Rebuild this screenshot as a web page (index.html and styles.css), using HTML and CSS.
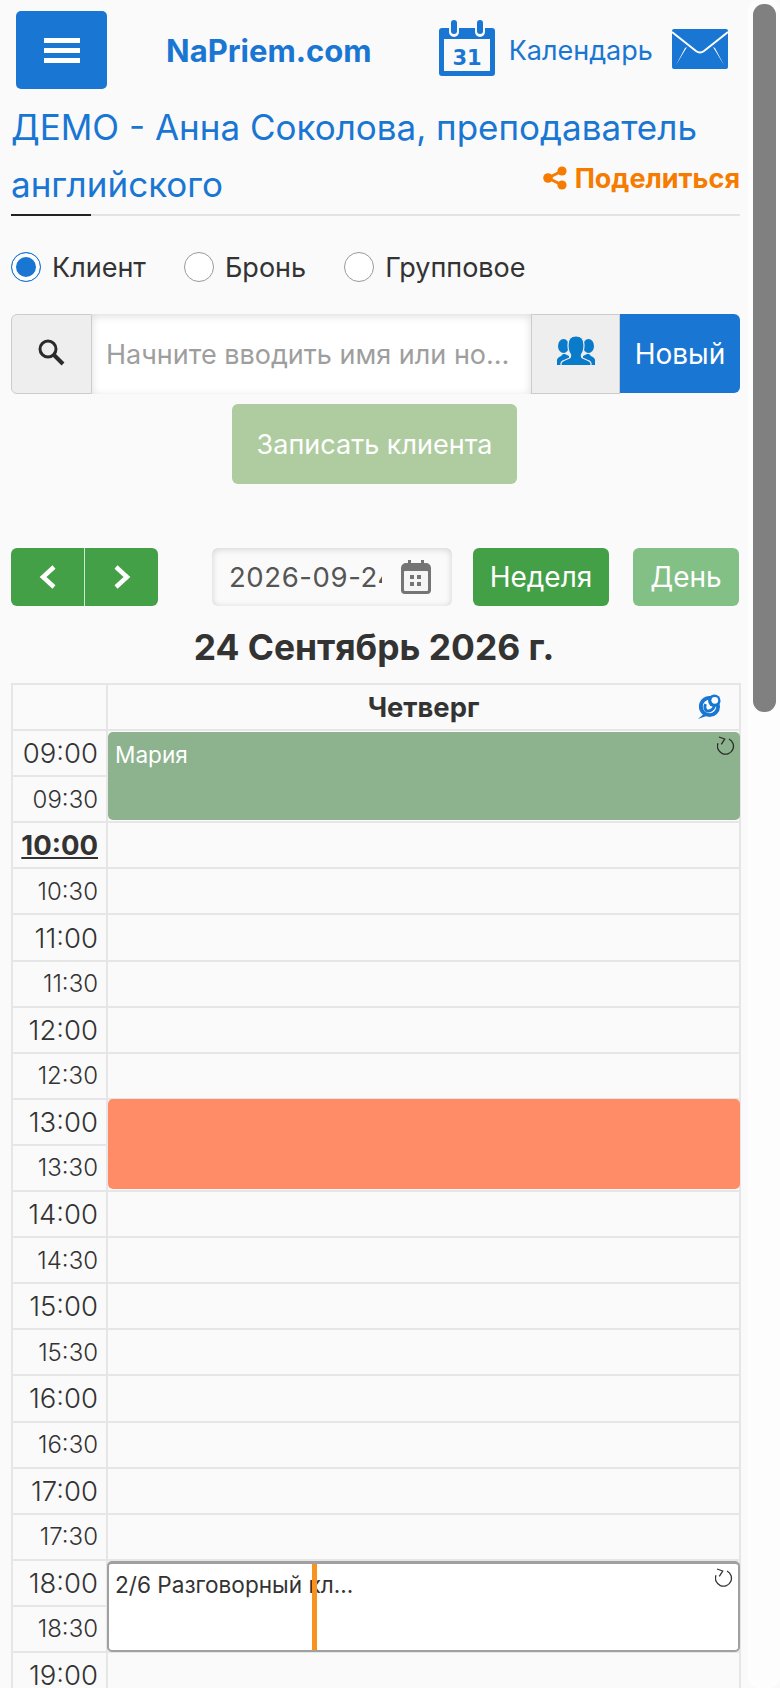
FILE: index.html
```html
<!DOCTYPE html>
<html lang="ru">
<head>
<meta charset="utf-8">
<title>NaPriem.com</title>
<link rel="stylesheet" href="styles.css">
</head>
<body>
<div class="scrolltrack"><div class="scrollthumb"></div></div>
<main class="page">
  <header class="topbar">
    <button class="burger" aria-label="Меню"><span></span><span></span><span></span></button>
    <a class="brand">NaPriem.com</a>
    <a class="callink">
      <svg class="calicon" viewBox="0 0 56 56"><path fill="#1976d2" d="M3 8h7v4a5 5 0 0 0 10 0V8h16v4a5 5 0 0 0 10 0V8h7a3 3 0 0 1 3 3v42a3 3 0 0 1-3 3H3a3 3 0 0 1-3-3V11a3 3 0 0 1 3-3z"/><rect x="12" y="0" width="6" height="14" rx="3" fill="#1976d2"/><rect x="38" y="0" width="6" height="14" rx="3" fill="#1976d2"/><rect x="5" y="19" width="46" height="32" fill="#fafafa"/><text x="28" y="45" text-anchor="middle" class="caltext">31</text></svg>
      <span>Календарь</span>
    </a>
    <svg class="mailicon" viewBox="0 0 56 40"><rect width="56" height="40" rx="2" fill="#1976d2"/><path d="M0 3l24 19q4 3 8 0L56 3" fill="none" stroke="#fff" stroke-width="2"/><path d="M13 19L4 36l11-18zM43 19l9 17-11-18z" fill="#fff"/></svg>
  </header>

  <div class="heading">
    <h1 class="title">ДЕМО - Анна Соколова, преподаватель</h1>
    <div class="headrow">
      <span class="title">английского</span>
      <a class="share"><svg class="shareicon" viewBox="0 0 24 24"><circle cx="19" cy="5" r="4.600"/><circle cx="19" cy="19" r="4.600"/><circle cx="5" cy="12" r="4.800"/><path d="M5 12L19 5M5 12l14 7" stroke="#f57c00" stroke-width="3"/></svg>Поделиться</a>
    </div>
  </div>

  <div class="radios">
    <label class="radio"><span class="dot on"></span>Клиент</label>
    <label class="radio"><span class="dot"></span>Бронь</label>
    <label class="radio"><span class="dot"></span>Групповое</label>
  </div>

  <div class="search">
    <span class="addon first"><svg class="searchicon" viewBox="0 0 28 28"><circle cx="11" cy="11" r="8" fill="none" stroke="#2b2b2b" stroke-width="3"/><path d="M17 17l9 9" stroke="#2b2b2b" stroke-width="4"/></svg></span>
    <input class="searchinput" type="text" placeholder="Начните вводить имя или номер телефона">
    <span class="addon"><svg class="usersicon" viewBox="0 0 38 30"><g fill="#0a7acb"><ellipse cx="6.500" cy="11" rx="5.500" ry="7"/><ellipse cx="31.500" cy="11" rx="5.500" ry="7"/><path d="M0 30v-5q0-2 4-4l2-2h2l4 2v9zM38 30v-5q0-2-4-4l-2-2h-2l-4 2v9z"/></g><path fill="#0a7acb" stroke="#eee" stroke-width="1.200" d="M4 30.500v-2q0-2 4-3.500l4.500-2q1.500-1 1-3.500-2.500-3-2.500-9.500Q11 1 19 1t8 9q0 6.500-2.500 9.500-.5 2.500 1 3.500l4.500 2q4 1.500 4 3.500v2z"/></svg></span>
    <button class="btn-new">Новый</button>
  </div>

  <div class="submitrow"><button class="btn-submit">Записать клиента</button></div>

  <div class="nav">
    <div class="pager">
      <button class="pagebtn"><svg viewBox="0 0 18 24"><path d="M15 2L4 12l11 10" fill="none" stroke="#fff" stroke-width="4.500"/></svg></button>
      <button class="pagebtn divided"><svg viewBox="0 0 18 24"><path d="M3 2l11 10L3 22" fill="none" stroke="#fff" stroke-width="4.500"/></svg></button>
    </div>
    <div class="date">
      <span class="datetext">2026-09-24</span>
      <svg class="dateicon" viewBox="0 0 30 34"><path fill="#757575" d="M5 3h2V0h3v3h10V0h3v3h2a5 5 0 0 1 5 5v22a4 4 0 0 1-4 4H4a4 4 0 0 1-4-4V8a5 5 0 0 1 5-5z"/><rect x="3" y="11" width="24" height="20" rx="1" fill="#f5f5f5"/><path fill="#757575" d="M9 15h4v4H9zM16 15h4v4h-4zM9 22h4v4H9zM16 22h4v4h-4z"/></svg>
    </div>
    <button class="btn-week">Неделя</button>
    <button class="btn-day">День</button>
  </div>

  <h2 class="dayhead">24 Сентябрь 2026 г.</h2>

  <div class="sched">
    <table class="grid">
      <thead>
        <tr><th class="timecol"></th><th class="daycol">Четверг<svg class="linkicon" viewBox="0 0 26 27"><path d="M9 19l-8 7 11-4z" fill="#1976d2"/><circle cx="13" cy="13" r="9" fill="#fff" stroke="#1976d2" stroke-width="4"/><circle cx="18" cy="7" r="6.500" fill="#1976d2"/><circle cx="18.500" cy="6.500" r="3.500" fill="#fff"/><path d="M18 12.500a6.500 6.500 0 0 1-8 5 6 6 0 0 1-1-7" fill="none" stroke="#1976d2" stroke-width="3"/></svg></th></tr>
      </thead>
      <tbody>
        <tr><td class="hour">09:00</td><td></td></tr>
        <tr><td class="half">09:30</td><td></td></tr>
        <tr><td class="hour now">10:00</td><td></td></tr>
        <tr><td class="half">10:30</td><td></td></tr>
        <tr><td class="hour">11:00</td><td></td></tr>
        <tr><td class="half">11:30</td><td></td></tr>
        <tr><td class="hour">12:00</td><td></td></tr>
        <tr><td class="half">12:30</td><td></td></tr>
        <tr><td class="hour">13:00</td><td></td></tr>
        <tr><td class="half">13:30</td><td></td></tr>
        <tr><td class="hour">14:00</td><td></td></tr>
        <tr><td class="half">14:30</td><td></td></tr>
        <tr><td class="hour">15:00</td><td></td></tr>
        <tr><td class="half">15:30</td><td></td></tr>
        <tr><td class="hour">16:00</td><td></td></tr>
        <tr><td class="half">16:30</td><td></td></tr>
        <tr><td class="hour">17:00</td><td></td></tr>
        <tr><td class="half">17:30</td><td></td></tr>
        <tr><td class="hour">18:00</td><td></td></tr>
        <tr><td class="half">18:30</td><td></td></tr>
        <tr><td class="hour last">19:00</td><td></td></tr>
      </tbody>
    </table>
    <div class="event ev-maria">Мария<svg class="repeat" viewBox="0 0 18 20"><path d="M12 4A8 8 0 1 1 1 8.300" fill="none" stroke="#2b2b2b" stroke-width="1.300"/><path d="M2 2l5.700 2-3.400 5.300" fill="none" stroke="#2b2b2b" stroke-width="1.300"/></svg></div>
    <div class="event ev-busy"></div>
    <div class="event ev-class">2/6 Разговорный кл...<svg class="repeat" viewBox="0 0 18 20"><path d="M12 4A8 8 0 1 1 1 8.300" fill="none" stroke="#333" stroke-width="1.300"/><path d="M2 2l5.700 2-3.400 5.300" fill="none" stroke="#333" stroke-width="1.300"/></svg><span class="tick"></span></div>
  </div>
</main>
</body>
</html>
```
FILE: styles.css
```css
* { box-sizing: border-box; }
html, body { margin: 0; height: 1688px; overflow: hidden; background: #fafafa; }
body { font-family: Inter, "Noto Sans", sans-serif; color: #333; }
button { font-family: inherit; border: 0; padding: 0; }
.page { width: 780px; padding: 11px 40px 0 11px; }

.scrolltrack { position: fixed; top: 0; right: 0; width: 32px; height: 1688px; background: #fdfdfd; border-radius: 10px; z-index: 5; }
.scrollthumb { position: absolute; left: 5px; top: 4px; width: 23px; height: 708px; background: #808080; border-radius: 11px; }

.topbar { display: flex; align-items: center; height: 78px; padding-left: 5px; }
.burger { width: 91px; height: 78px; background: #1976d2; border-radius: 5px; display: flex; flex-direction: column; justify-content: center; align-items: center; gap: 5px; }
.burger span { display: block; width: 36px; height: 5px; background: #fff; }
.brand { margin-left: 59px; font-size: 31px; font-weight: 700; color: #1976d2; }
.callink { display: flex; align-items: center; margin-left: 67px; color: #1976d2; font-size: 27px; }
.callink span { margin-left: 14px; }
.calicon { width: 56px; height: 56px; margin-bottom: 4px; }
.caltext { font-family: "DejaVu Sans", sans-serif; font-size: 21px; font-weight: 700; fill: #1976d2; }
.mailicon { width: 56px; height: 40px; margin-left: 19px; margin-top: -3px; }

.heading { border-bottom: 2px solid #e3e3e3; height: 127px; padding-top: 10px; position: relative; }
.heading::after { content: ""; position: absolute; left: 0; bottom: -2px; width: 80px; height: 2px; background: #222; }
.title { margin: 0; font-size: 35px; font-weight: 400; line-height: 57px; color: #1976d2; }
.headrow { display: flex; justify-content: space-between; height: 57px; }
.share { display: flex; align-items: center; gap: 8px; height: 32px; margin-top: 6px; font-size: 27px; font-weight: 700; color: #f57c00; }
.shareicon { width: 24px; height: 24px; fill: #f57c00; }

.radios { display: flex; align-items: center; height: 34px; margin-top: 34px; }
.radio { display: flex; align-items: center; font-size: 27px; margin-right: 38px; color: #333; }
.dot { width: 30px; height: 30px; margin-right: 11px; border-radius: 50%; border: 1.500px solid #9a9a9a; background: #fff; }
.dot.on { border-color: #1976d2; background: #1976d2; box-shadow: inset 0 0 0 4px #fff; }

.search { display: flex; height: 80px; margin-top: 30px; }
.addon { width: 89px; height: 80px; flex: none; background: #eee; border: 1.500px solid #ccc; display: flex; align-items: center; justify-content: center; }
.addon.first { width: 81px; border-radius: 6px 0 0 6px; }
.searchicon { width: 28px; height: 28px; margin: -4px 2px 0 0; }
.usersicon { width: 38px; height: 30px; margin-top: -9px; }
.searchinput { flex: 1; min-width: 0; height: 80px; border: 0; background: #fff; padding: 0 20px 0 14px; font: 400 27px Inter, sans-serif; text-overflow: ellipsis; box-shadow: inset 0 2px 8px rgba(0,0,0,.14); outline: 0; }
.searchinput::placeholder { color: #9e9e9e; opacity: 1; text-overflow: ellipsis; }
.btn-new { width: 120px; height: 79px; background: #1976d2; color: #fff; font-size: 28px; border-radius: 0 6px 6px 0; }

.submitrow { display: flex; justify-content: center; margin-top: 10px; padding-right: 2px; }
.btn-submit { width: 285px; height: 80px; background: #aecc9f; color: #fff; font-size: 27px; border-radius: 6px; }

.nav { display: flex; align-items: center; height: 58px; margin-top: 64px; }
.pager { display: flex; width: 147px; height: 58px; border-radius: 6px; overflow: hidden; }
.pagebtn { width: 73px; height: 58px; background: #43a047; display: flex; align-items: center; justify-content: center; }
.pagebtn.divided { width: 74px; border-left: 1px solid #cfe6d0; }
.pagebtn svg { width: 18px; height: 24px; }
.date { display: flex; align-items: center; width: 240px; height: 58px; margin-left: 54px; padding: 0 21px 0 17px; border-radius: 6px; box-shadow: inset 0 1px 7px rgba(0,0,0,.17); }
.datetext { width: 153px; overflow: hidden; white-space: nowrap; font-size: 27.500px; color: #555; letter-spacing: .6px; }
.dateicon { width: 30px; height: 34px; margin-left: auto; }
.btn-week { width: 136px; height: 58px; margin-left: 21px; background: #43a047; color: #fff; font-size: 28px; border-radius: 6px; }
.btn-day { width: 106px; height: 58px; margin-left: 24px; background: #83c086; color: #fff; font-size: 28px; border-radius: 6px; }

.dayhead { margin: 20px 0 0; height: 57px; padding-right: 3px; text-align: center; font-size: 35.400px; font-weight: 700; line-height: 44px; color: #333; }

.sched { position: relative; }
.grid { width: 730px; border-collapse: collapse; table-layout: fixed; }
.grid th, .grid td { border: 2px solid #e6e6e6; padding: 0; }
.grid tr { height: 46.100px; }
.timecol { width: 95px; }
.daycol { position: relative; font-size: 27.400px; font-weight: 700; color: #333; }
.linkicon { position: absolute; right: 17px; top: 9px; width: 25px; height: 26px; }
.grid td:first-child { text-align: right; padding-right: 8px; color: #333; font-weight: 300; }
.grid td.now { font-weight: 700; text-decoration: underline; }
.grid td.last { line-height: 30px; }
.hour { font-size: 27.500px; }
.half { font-size: 24px; }

.event { position: absolute; left: 97px; width: 632px; border-radius: 5px; padding: 9px 7px; font-size: 22.600px; line-height: 28px; }
.ev-maria { top: 49px; height: 88px; background: #8cb38d; color: #fff; }
.ev-busy { top: 416px; height: 90px; background: #ff8c66; }
.ev-class { left: 96px; width: 633px; top: 878px; height: 91px; background: #fff; border: 2px solid #a0a0a0; border-top-width: 3px; color: #333; padding: 7px 6px; }
.repeat { position: absolute; right: 5px; top: 3px; width: 18px; height: 20px; }
.tick { position: absolute; left: 203px; top: 0; bottom: 0; width: 5px; background: #f7931e; }
```
